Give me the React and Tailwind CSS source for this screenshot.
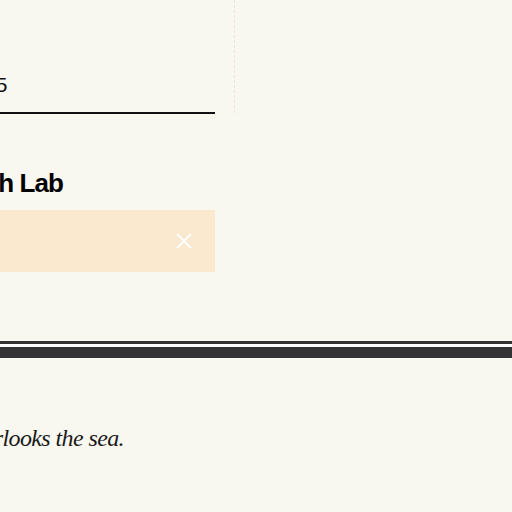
import { X } from "lucide-react";

export default function App() {
  return (
    <div className="w-full h-[512px] overflow-hidden bg-[#f8f7f0] text-[#111] font-['Liberation_Sans',Arial,sans-serif]">
      {/* top row: form column + dashed gutter */}
      <div className="flex">
        <div className="-ml-[45px] w-[260px] shrink-0">
          <div className="pt-[71px] pb-[13px] border-b-2 border-[#111] text-[21px] leading-[28px] whitespace-nowrap">
            10:45
          </div>

          <h2 className="mt-[53px] ml-[3px] text-[26px] leading-[32px] font-bold text-black tracking-[-0.9px] whitespace-nowrap">
            Tech Lab
          </h2>

          <div className="mt-[11px] h-[62px] bg-[#fae9cf] flex items-center justify-end pr-[18px]">
            <X size={26} strokeWidth={1.7} className="text-white" />
          </div>
        </div>

        <div className="ml-[19px] h-[113px] border-l border-dashed border-[#f5e0da]" />
      </div>

      {/* double rule */}
      <div className="mt-[69px]">
        <div className="h-[3px] bg-[#333]" />
        <div className="h-[3px] bg-[#fcfcfa]" />
        <div className="h-[11px] bg-[#333]" />
      </div>

      <div className="mt-[65px] flex justify-end w-[124px]">
        <p className="shrink-0 whitespace-nowrap italic text-[24px] leading-[30px] tracking-[-0.6px] text-[#1a1a1a] font-['Liberation_Serif','Times_New_Roman',serif]">
          The terrace overlooks the sea.
        </p>
      </div>
    </div>
  );
}
